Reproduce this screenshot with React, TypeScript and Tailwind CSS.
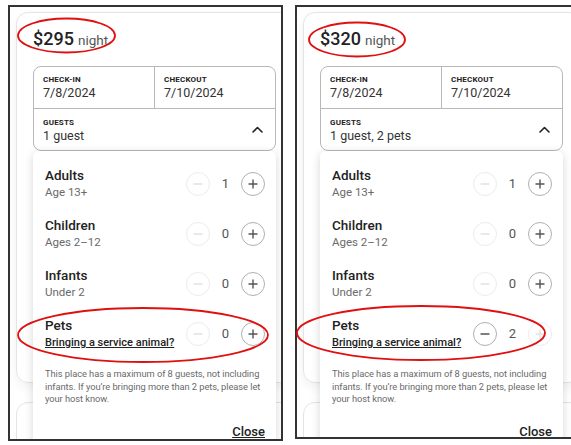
import React from 'react';

type Row = { title: string; sub: string; count: number; link?: boolean; minusOn: boolean; plusOn: boolean };

const font = { fontFamily: 'Roboto, "Noto Sans", sans-serif' };

function MinusIcon({ on }: { on: boolean }) {
  return (
    <svg width="10" height="10" viewBox="0 0 10 10" fill="none">
      <path d="M1 5h8" stroke={on ? '#555' : '#e2e2e2'} strokeWidth="1.4" strokeLinecap="round" />
    </svg>
  );
}

function PlusIcon({ on }: { on: boolean }) {
  return (
    <svg width="10" height="10" viewBox="0 0 10 10" fill="none">
      <path d="M1 5h8M5 1v8" stroke={on ? '#555' : '#e2e2e2'} strokeWidth="1.4" strokeLinecap="round" />
    </svg>
  );
}

function Stepper({ count, minusOn, plusOn }: { count: number; minusOn: boolean; plusOn: boolean }) {
  return (
    <div className="flex items-center">
      <div className={`w-[24px] h-[24px] rounded-full border flex items-center justify-center ${minusOn ? 'border-[#b0b0b0]' : 'border-[#ececec]'}`}>
        <MinusIcon on={minusOn} />
      </div>
      <div className="w-[31px] text-center text-[13px] text-[#555]">{count}</div>
      <div className={`w-[24px] h-[24px] rounded-full border flex items-center justify-center ${plusOn ? 'border-[#b0b0b0]' : 'border-[#ececec]'}`}>
        <PlusIcon on={plusOn} />
      </div>
    </div>
  );
}

function Panel({ price, guests, rows, boxClass }: { price: string; guests: string; rows: Row[]; boxClass: string }) {
  return (
    <div className={`${boxClass} shrink-0 border-2 border-[#333] overflow-hidden bg-white`}>
      <div className="ml-[6px] mt-[5px] w-[278px]">
        <div className="relative h-[371px] rounded-xl border border-[#e4e4e4] shadow-[0_4px_12px_rgba(0,0,0,0.06)] pl-[16px] pt-[14px]">
          <div className="flex items-baseline gap-[4px] text-[#222] leading-[24px]">
            <span className="text-[18px] font-medium">{price}</span>
            <span className="text-[13.5px] text-[#555]">night</span>
          </div>
          <div className="relative mt-[14px] w-[243px]">
            <div className="rounded-lg border border-[#b8b8b8]">
              <div className="flex h-[42px] border-b border-[#b8b8b8]">
                <div className="flex-1 border-r border-[#b8b8b8] pl-[9px] pt-[7px]">
                  <div className="text-[8px] font-bold leading-[11px] tracking-[0.2px] text-[#222]">CHECK-IN</div>
                  <div className="text-[12.5px] leading-[15px] text-[#333]">7/8/2024</div>
                </div>
                <div className="flex-1 pl-[9px] pt-[7px]">
                  <div className="text-[8px] font-bold leading-[11px] tracking-[0.2px] text-[#222]">CHECKOUT</div>
                  <div className="text-[12.5px] leading-[15px] text-[#333]">7/10/2024</div>
                </div>
              </div>
              <div className="flex h-[41px] items-center pl-[9px] pr-[12px]">
                <div className="flex-1">
                  <div className="text-[8px] font-bold leading-[11px] tracking-[0.2px] text-[#222]">GUESTS</div>
                  <div className="text-[12.5px] leading-[15px] text-[#333]">{guests}</div>
                </div>
                <svg width="11" height="7" viewBox="0 0 11 7" fill="none">
                  <path d="M1 6l4.5-4.5L10 6" stroke="#222" strokeWidth="1.6" strokeLinecap="round" strokeLinejoin="round" />
                </svg>
              </div>
            </div>
            <div className="absolute left-0 top-full w-[243px] h-[320px] bg-white rounded-md shadow-[0_2px_10px_rgba(0,0,0,0.16)] pl-[12px] pr-[11px] pt-[16px]">
              <div className="flex flex-col gap-[16px]">
                {rows.map((r) => (
                  <div key={r.title} className="flex items-center justify-between">
                    <div>
                      <div className="text-[13.5px] font-medium leading-[17px] text-[#222]">{r.title}</div>
                      {r.link ? (
                        <div className="text-[11px] font-medium leading-[17px] text-[#222] underline">{r.sub}</div>
                      ) : (
                        <div className="text-[11.5px] leading-[17px] text-[#6a6a6a]">{r.sub}</div>
                      )}
                    </div>
                    <Stepper count={r.count} minusOn={r.minusOn} plusOn={r.plusOn} />
                  </div>
                ))}
              </div>
              <p className="mt-[17px] text-[9.3px] leading-[12.7px] tracking-[-0.05px] text-[#6a6a6a]">
                This place has a maximum of 8 guests, not including infants. If you’re bringing more than 2 pets, please let your host know.
              </p>
              <div className="mt-[16px] flex justify-end">
                <span className="text-[13px] font-medium text-[#222] underline">Close</span>
              </div>
            </div>
          </div>
        </div>
        <div className="mt-[19px] h-[60px] rounded-xl border border-[#e4e4e4]" />
      </div>
    </div>
  );
}

export default function App() {
  const left: Row[] = [
    { title: 'Adults', sub: 'Age 13+', count: 1, minusOn: false, plusOn: true },
    { title: 'Children', sub: 'Ages 2–12', count: 0, minusOn: false, plusOn: true },
    { title: 'Infants', sub: 'Under 2', count: 0, minusOn: false, plusOn: true },
    { title: 'Pets', sub: 'Bringing a service animal?', count: 0, link: true, minusOn: false, plusOn: true },
  ];
  const right: Row[] = [
    { title: 'Adults', sub: 'Age 13+', count: 1, minusOn: false, plusOn: true },
    { title: 'Children', sub: 'Ages 2–12', count: 0, minusOn: false, plusOn: true },
    { title: 'Infants', sub: 'Under 2', count: 0, minusOn: false, plusOn: true },
    { title: 'Pets', sub: 'Bringing a service animal?', count: 2, link: true, minusOn: true, plusOn: false },
  ];
  return (
    <div className="relative w-[571px] h-[445px] overflow-hidden bg-white" style={font}>
      <div className="flex items-start gap-[12px] pl-[8px] pt-[5px]">
        <Panel price="$295" guests="1 guest" rows={left} boxClass="w-[275px] h-[436px]" />
        <Panel price="$320" guests="1 guest, 2 pets" rows={right} boxClass="w-[290px] h-[434px]" />
      </div>
      <svg className="absolute inset-0 pointer-events-none" width="571" height="445" viewBox="0 0 571 445" fill="none">
        <ellipse cx="66.5" cy="35.5" rx="48.5" ry="17" stroke="#e01010" strokeWidth="1.8" />
        <ellipse cx="143" cy="335" rx="125" ry="27" stroke="#e01010" strokeWidth="1.8" />
        <ellipse cx="357" cy="39.5" rx="48" ry="17" stroke="#e01010" strokeWidth="1.8" />
        <ellipse cx="421" cy="333" rx="124" ry="27" stroke="#e01010" strokeWidth="1.8" />
      </svg>
    </div>
  );
}
